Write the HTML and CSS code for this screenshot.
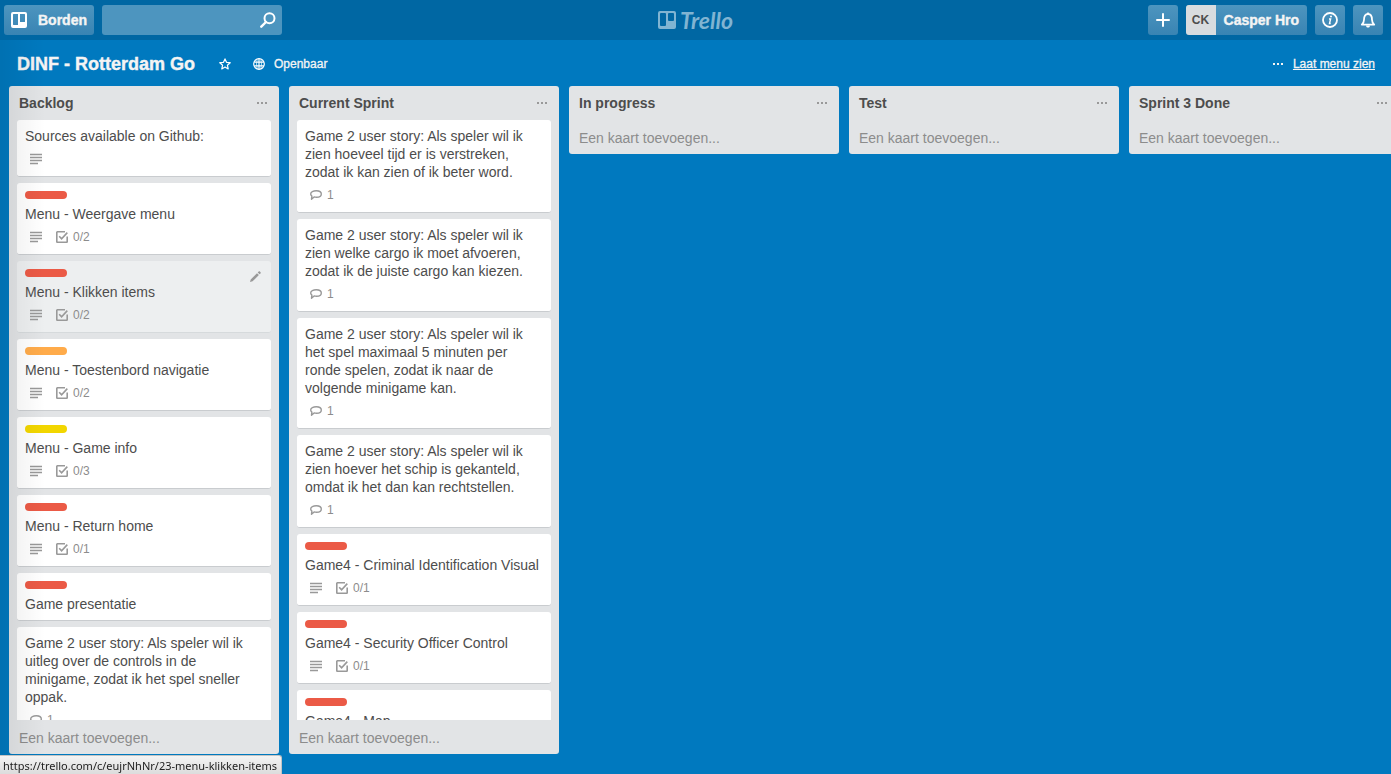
FILE: index.html
```html
<!DOCTYPE html>
<html lang="nl">
<head>
<meta charset="utf-8">
<title>DINF - Rotterdam Go | Trello</title>
<link rel="stylesheet" href="styles.css">
</head>
<body>
<svg class="sprite" aria-hidden="true">
  <symbol id="i-desc" viewBox="0 0 12 12"><path d="M0 1.500h12M0 4.500h12M0 7.500h12M0 10.500h8" stroke="currentColor" stroke-width="1.500" fill="none"/></symbol>
  <symbol id="i-check" viewBox="0 0 12 12"><path d="M9 .8H1.300a.5.5 0 0 0-.5.5v9.400c0 .3.2.5.5.5h9.400c.3 0 .5-.2.5-.5V5.500M3.200 5.200l2.400 2.600L11.300 1.600" stroke="currentColor" stroke-width="1.600" fill="none"/></symbol>
  <symbol id="i-comment" viewBox="0 0 12 12"><path d="M6.300 1.700C9.300 1.700 11.300 3 11.300 4.900S9.400 8.200 6.500 8.200C5.600 8.200 4.800 8.100 4.100 7.900L1.500 10.200 1.900 7C1 6.400.7 5.700.7 4.900.7 3 3.300 1.700 6.300 1.700Z" stroke="currentColor" stroke-width="1.400" stroke-linejoin="round" fill="none"/></symbol>
  <symbol id="i-dots" viewBox="0 0 12 4"><path d="M1 1h2v2H1zM5 1h2v2H5zM9 1h2v2H9z" fill="currentColor"/></symbol>
</svg>

<header class="topbar">
  <div class="topbar-left">
    <button class="btn boards-btn" type="button">
      <svg width="16" height="16" viewBox="0 0 16 16"><path fill="#fff" fill-rule="evenodd" d="M2 0h12a2 2 0 0 1 2 2v12a2 2 0 0 1-2 2H2a2 2 0 0 1-2-2V2a2 2 0 0 1 2-2Zm.5 2a.5.5 0 0 0-.5.5v10c0 .3.2.5.5.5H7V2Zm6.500 0v8h4.500a.5.5 0 0 0 .5-.5v-7a.5.5 0 0 0-.5-.5Z"/></svg>
      Borden
    </button>
    <label class="search">
      <input type="text" aria-label="Zoeken">
      <svg class="search-icon" width="16" height="16" viewBox="0 0 16 16"><circle cx="9.500" cy="6.300" r="5" fill="none" stroke="#fff" stroke-width="2"/><path d="M6 10 1.300 14.700" stroke="#fff" stroke-width="2.400" stroke-linecap="round"/></svg>
    </label>
  </div>
  <a class="logo" href="#">
    <svg width="18" height="18" viewBox="0 0 18 18"><path fill="currentColor" fill-rule="evenodd" d="M2 0h14a2 2 0 0 1 2 2v14a2 2 0 0 1-2 2H2a2 2 0 0 1-2-2V2a2 2 0 0 1 2-2Zm1 2a1 1 0 0 0-1 1v11a1 1 0 0 0 1 1h4a1 1 0 0 0 1-1V3a1 1 0 0 0-1-1Zm8 0a1 1 0 0 0-1 1v6a1 1 0 0 0 1 1h4a1 1 0 0 0 1-1V3a1 1 0 0 0-1-1Z"/></svg>
    <span>Trello</span>
  </a>
  <nav class="topbar-right">
    <button class="btn icon-btn" type="button" aria-label="Toevoegen"><svg width="14" height="14" viewBox="0 0 14 14"><path d="M7 1v12M1 7h12" stroke="#fff" stroke-width="2" stroke-linecap="round"/></svg></button>
    <button class="btn member-btn" type="button"><span class="avatar">CK</span><span class="member-name">Casper Hro</span></button>
    <button class="btn icon-btn" type="button" aria-label="Informatie"><svg width="16" height="16" viewBox="0 0 16 16"><circle cx="8" cy="8" r="7" fill="none" stroke="#fff" stroke-width="1.800"/><path d="M7 7h1.600L7.500 11.500h1.200" fill="none" stroke="#fff" stroke-width="1.400"/><circle cx="9" cy="4.600" r="1" fill="#fff"/></svg></button>
    <button class="btn icon-btn" type="button" aria-label="Meldingen"><svg width="16" height="16" viewBox="0 0 16 16"><path d="M1.800 12.600C3.400 11.200 4 10 4 7.800 4 4.300 5.400 2 8 2s4 2.300 4 5.800c0 2.200.6 3.400 2.200 4.800Z" fill="none" stroke="#fff" stroke-width="1.800" stroke-linejoin="round"/><path d="M8 .4v2" stroke="#fff" stroke-width="1.600"/><path d="M6 13.400h4c-.2 1.500-1 2.200-2 2.200s-1.800-.7-2-2.200Z" fill="#fff"/></svg></button>
  </nav>
</header>

<main class="board">
  <div class="board-header">
    <h1>DINF - Rotterdam Go</h1>
    <button class="plain star-btn" type="button" aria-label="Ster"><svg width="12" height="12" viewBox="0 0 12 12"><path d="m6 .9 1.500 3.400 3.700.4-2.800 2.500.8 3.700L6 9l-3.200 1.900.8-3.700L.8 4.700l3.700-.4Z" fill="none" stroke="#fff" stroke-width="1.200" stroke-linejoin="round"/></svg></button>
    <button class="plain visibility-btn" type="button"><svg width="12" height="12" viewBox="0 0 12 12"><g fill="none" stroke="#fff" stroke-width="1.200"><circle cx="6" cy="6" r="5.300"/><path d="M6 .5v11M1.200 4.200h9.600M1.200 7.800h9.600"/><path d="M4.200 1.200Q2.800 6 4.200 10.800M7.800 1.200Q9.200 6 7.800 10.800" stroke-width=".7"/></g></svg>Openbaar</button>
    <a class="menu-link" href="#"><svg width="12" height="4"><use href="#i-dots"/></svg><span>Laat menu zien</span></a>
  </div>

  <div class="lists">
    <section class="list">
      <header class="list-header"><h2>Backlog</h2><button class="plain" type="button" aria-label="Lijstacties"><svg width="12" height="4"><use href="#i-dots"/></svg></button></header>
      <div class="cards">
        <article class="card"><p>Sources available on Github:</p><div class="badges"><svg><use href="#i-desc"/></svg></div></article>
        <article class="card"><i class="label red"></i><p>Menu - Weergave menu</p><div class="badges"><svg><use href="#i-desc"/></svg><span class="badge"><svg><use href="#i-check"/></svg>0/2</span></div></article>
        <article class="card active"><i class="label red"></i><button class="plain edit" type="button" aria-label="Bewerken"><svg width="12" height="12" viewBox="0 0 12 12"><path d="M1 11l.7-2.600L8 2.200l1.900 1.900-6.300 6.200ZM8.700 1.500 9.700.6c.4-.4.800-.3 1.200 0l.6.6c.4.400.4.800 0 1.200l-.9.9Z" fill="#999"/></svg></button><p>Menu - Klikken items</p><div class="badges"><svg><use href="#i-desc"/></svg><span class="badge"><svg><use href="#i-check"/></svg>0/2</span></div></article>
        <article class="card"><i class="label orange"></i><p>Menu - Toestenbord navigatie</p><div class="badges"><svg><use href="#i-desc"/></svg><span class="badge"><svg><use href="#i-check"/></svg>0/2</span></div></article>
        <article class="card"><i class="label yellow"></i><p>Menu - Game info</p><div class="badges"><svg><use href="#i-desc"/></svg><span class="badge"><svg><use href="#i-check"/></svg>0/3</span></div></article>
        <article class="card"><i class="label red"></i><p>Menu - Return home</p><div class="badges"><svg><use href="#i-desc"/></svg><span class="badge"><svg><use href="#i-check"/></svg>0/1</span></div></article>
        <article class="card"><i class="label red"></i><p>Game presentatie</p></article>
        <article class="card"><p>Game 2 user story: Als speler wil ik uitleg over de controls in de minigame, zodat ik het spel sneller oppak.</p><div class="badges"><span class="badge"><svg><use href="#i-comment"/></svg>1</span></div></article>
      </div>
      <button class="add-card" type="button">Een kaart toevoegen...</button>
    </section>

    <section class="list">
      <header class="list-header"><h2>Current Sprint</h2><button class="plain" type="button" aria-label="Lijstacties"><svg width="12" height="4"><use href="#i-dots"/></svg></button></header>
      <div class="cards">
        <article class="card"><p>Game 2 user story: Als speler wil ik zien hoeveel tijd er is verstreken, zodat ik kan zien of ik beter word.</p><div class="badges"><span class="badge"><svg><use href="#i-comment"/></svg>1</span></div></article>
        <article class="card"><p>Game 2 user story: Als speler wil ik zien welke cargo ik moet afvoeren, zodat ik de juiste cargo kan kiezen.</p><div class="badges"><span class="badge"><svg><use href="#i-comment"/></svg>1</span></div></article>
        <article class="card"><p>Game 2 user story: Als speler wil ik het spel maximaal 5 minuten per ronde spelen, zodat ik naar de volgende minigame kan.</p><div class="badges"><span class="badge"><svg><use href="#i-comment"/></svg>1</span></div></article>
        <article class="card"><p>Game 2 user story: Als speler wil ik zien hoever het schip is gekanteld, omdat ik het dan kan rechtstellen.</p><div class="badges"><span class="badge"><svg><use href="#i-comment"/></svg>1</span></div></article>
        <article class="card"><i class="label red"></i><p>Game4 - Criminal Identification Visual</p><div class="badges"><svg><use href="#i-desc"/></svg><span class="badge"><svg><use href="#i-check"/></svg>0/1</span></div></article>
        <article class="card"><i class="label red"></i><p>Game4 - Security Officer Control</p><div class="badges"><svg><use href="#i-desc"/></svg><span class="badge"><svg><use href="#i-check"/></svg>0/1</span></div></article>
        <article class="card"><i class="label red"></i><p>Game4 - Map</p></article>
      </div>
      <button class="add-card" type="button">Een kaart toevoegen...</button>
    </section>

    <section class="list">
      <header class="list-header"><h2>In progress</h2><button class="plain" type="button" aria-label="Lijstacties"><svg width="12" height="4"><use href="#i-dots"/></svg></button></header>
      <button class="add-card" type="button">Een kaart toevoegen...</button>
    </section>
    <section class="list">
      <header class="list-header"><h2>Test</h2><button class="plain" type="button" aria-label="Lijstacties"><svg width="12" height="4"><use href="#i-dots"/></svg></button></header>
      <button class="add-card" type="button">Een kaart toevoegen...</button>
    </section>
    <section class="list">
      <header class="list-header"><h2>Sprint 3 Done</h2><button class="plain" type="button" aria-label="Lijstacties"><svg width="12" height="4"><use href="#i-dots"/></svg></button></header>
      <button class="add-card" type="button">Een kaart toevoegen...</button>
    </section>
  </div>
</main>
<div class="status">https://trello.com/c/eujrNhNr/23-menu-klikken-items</div>
</body>
</html>
```
FILE: styles.css
```css
* { box-sizing: border-box; }

body {
  margin: 0;
  height: 100vh;
  display: flex;
  flex-direction: column;
  overflow: hidden;
  background: #0079bf;
  color: #4d4d4d;
  font: 14px/18px "Liberation Sans", Arial, sans-serif;
}

h1, h2, p { margin: 0; }
button, input { font: inherit; }
svg { display: block; flex: none; }
.sprite { position: absolute; width: 0; height: 0; }

.plain {
  display: flex;
  align-items: center;
  padding: 0;
  border: 0;
  background: none;
  color: inherit;
}

/* Top bar */
.topbar {
  display: grid;
  grid-template-columns: 1fr auto 1fr;
  align-items: center;
  flex: none;
  height: 40px;
  background: #0067a3;
}
.topbar-left, .topbar-right { display: flex; gap: 8px; }
.topbar-left { padding-left: 4px; }
.topbar-right { padding-right: 8px; justify-content: flex-end; }

.btn {
  display: flex;
  align-items: center;
  height: 30px;
  padding: 0;
  border: 0;
  border-radius: 3px;
  background: linear-gradient(#4d95bf, #3984b3);
  color: #f4f4f4;
  font-weight: 700;
  -webkit-text-stroke: 0.4px;
}
.boards-btn { gap: 11px; padding: 0 7px; }
.icon-btn { width: 30px; justify-content: center; }
.avatar {
  display: flex;
  align-items: center;
  justify-content: center;
  width: 30px;
  height: 30px;
  border-radius: 3px 0 0 3px;
  background: #d9dcdf;
  color: #4d4d4d;
  font-size: 12px;
  -webkit-text-stroke: 0;
}
.member-name { padding: 0 8px; }

.search { position: relative; }
.search input {
  display: block;
  width: 180px;
  height: 30px;
  padding: 0 32px 0 8px;
  border: 0;
  border-radius: 3px;
  background: #4d95bf;
  color: #fff;
}
.search-icon { position: absolute; top: 7px; right: 6px; }

.logo {
  display: flex;
  align-items: center;
  gap: 4px;
  color: #80b4d2;
  font: italic 700 23px/30px Lato, sans-serif;
  text-decoration: none;
}

/* Board */
.board {
  position: relative;
  display: flex;
  flex-direction: column;
  flex: 1;
  min-height: 0;
  padding-bottom: 20px;
}
.board::after {
  content: "";
  position: absolute;
  inset: 0 auto 0 0;
  width: 45px;
  background: linear-gradient(90deg, rgba(0, 0, 0, .07), transparent);
  pointer-events: none;
}
.board-header {
  display: flex;
  align-items: center;
  flex: none;
  height: 46px;
  padding: 2px 16px 0 17px;
  color: #f4f4f4;
  font-size: 12px;
}
.board-header h1 {
  font-size: 18px;
  line-height: 24px;
  -webkit-text-stroke: 0.4px;
}
.star-btn { margin-left: 24px; }
.visibility-btn { margin-left: 22px; gap: 9px; -webkit-text-stroke: 0.3px; }
.menu-link {
  display: flex;
  align-items: center;
  gap: 9px;
  margin-left: auto;
  color: inherit;
  text-decoration: none;
  -webkit-text-stroke: 0.3px;
}
.menu-link span { text-decoration: underline; }

.lists {
  display: flex;
  align-items: flex-start;
  gap: 10px;
  flex: 1;
  min-height: 0;
  padding-left: 9px;
  overflow: hidden;
}
.list {
  display: flex;
  flex-direction: column;
  flex: none;
  width: 270px;
  max-height: 100%;
  border-radius: 3px;
  background: #e2e4e6;
}
.list-header {
  display: flex;
  align-items: center;
  justify-content: space-between;
  flex: none;
  height: 34px;
  padding: 0 11px 0 10px;
}
.list-header h2 { font-size: 14px; line-height: 18px; }
.list-header button { color: #999; }
.cards {
  display: flex;
  flex-direction: column;
  gap: 6px;
  min-height: 0;
  padding: 0 8px;
  overflow: hidden;
}
.add-card {
  flex: none;
  height: 34px;
  padding: 2px 10px 0;
  border: 0;
  background: none;
  color: #8c8c8c;
  text-align: left;
}

/* Cards */
.card {
  position: relative;
  flex: none;
  padding: 7px 8px;
  border-bottom: 1px solid #c9cccf;
  border-radius: 3px;
  background: #fff;
}
.card.active { background: #edeff0; border-bottom-color: #d6dadc; }
.label {
  display: block;
  width: 42px;
  height: 8px;
  margin: 1px 0 6px;
  border-radius: 4px;
}
.red { background: #eb5a46; }
.orange { background: #ffab4a; }
.yellow { background: #f2d600; }
.edit { position: absolute; top: 10px; right: 10px; }
.badges {
  display: flex;
  align-items: center;
  gap: 14px;
  height: 18px;
  margin: 5px 0 1px;
  padding-left: 5px;
  color: #8c8c8c;
  font-size: 12px;
}
.badges svg { width: 12px; height: 12px; color: #999; }
.badge { display: flex; align-items: center; gap: 5px; }

/* Browser link preview */
.status {
  position: fixed;
  left: 0;
  bottom: 0;
  height: 19px;
  padding: 0 4px 0 3px;
  border: 1px solid #c4c4c4;
  border-left: 0;
  border-bottom: 0;
  border-radius: 0 3px 0 0;
  background: linear-gradient(#f4f4f4, #dcdcdc);
  color: #222;
  font: 11px/19px "Noto Sans", sans-serif;
}
```
